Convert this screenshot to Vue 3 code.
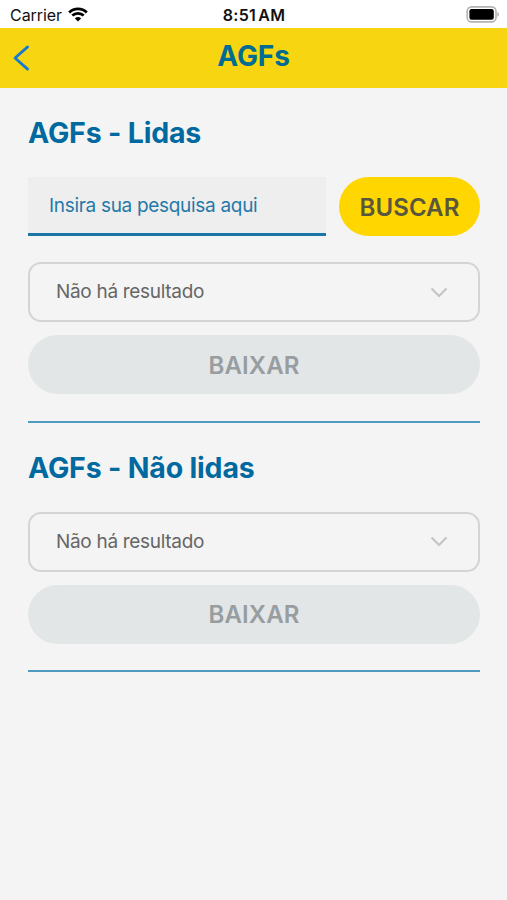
<template>
    <div class="screen">
        <div class="status-bar">
            <div class="status-left">
                <span class="carrier">Carrier</span>
                <svg class="wifi" viewBox="0 0 20 15" width="20" height="15">
                    <path d="M1.2 5.4a12.6 12.6 0 0 1 17.6 0" />
                    <path d="M4.3 8.6a8.2 8.2 0 0 1 11.4 0" />
                    <path class="wifi-dot" d="M10 14.6 6.9 11.4a4.5 4.5 0 0 1 6.2 0z" />
                </svg>
            </div>
            <span class="time">8:51 AM</span>
            <svg class="battery" viewBox="0 0 34 17" width="34" height="17">
                <rect class="battery-shell" x="2.2" y="0.9" width="28.8" height="15" rx="4.4" />
                <rect x="4.4" y="3" width="24.4" height="10.8" rx="2.2" />
                <path class="battery-cap" d="M32.4 6.1v4.6a2.5 2.5 0 0 0 0-4.6z" />
            </svg>
        </div>

        <header class="header">
            <button class="back" aria-label="Voltar">
                <svg viewBox="0 0 18 28" width="18" height="28">
                    <path d="M15.6 2.9 3 14 15.6 25.1" />
                </svg>
            </button>
            <h1>AGFs</h1>
        </header>

        <main class="content">
            <section v-for="section in sections" :key="section.title" class="section">
                <h2>{{ section.title }}</h2>
                <form v-if="section.searchable" class="search" @submit.prevent>
                    <input v-model="search" type="text" placeholder="Insira sua pesquisa aqui">
                    <button class="btn btn-search">BUSCAR</button>
                </form>
                <div class="select">
                    <span>Não há resultado</span>
                    <svg viewBox="0 0 18 12" width="18" height="12">
                        <path d="M1.5 2.5 9 10 16.5 2.5" />
                    </svg>
                </div>
                <button class="btn btn-download" disabled>BAIXAR</button>
            </section>
        </main>
    </div>
</template>

<script setup>
import { ref } from 'vue';

const search = ref('');

const sections = [
    { title: 'AGFs - Lidas', searchable: true },
    { title: 'AGFs - Não lidas', searchable: false }
];
</script>

<style>
body {
    margin: 0;
    background-color: #f4f4f4;
}
</style>

<style scoped>
.screen {
    min-height: 900px;
    background-color: #f4f4f4;
    font-family: Inter, "Liberation Sans", sans-serif;
}

.screen * {
    box-sizing: border-box;
}

.status-bar {
    display: grid;
    grid-template-columns: 1fr auto 1fr;
    align-items: center;
    height: 28px;
    padding: 1px 8px 0 10px;
    background-color: #fff;
    color: #111;
    font-size: 16px;
}

.status-left {
    display: flex;
    align-items: center;
    gap: 6px;
}

.carrier {
    letter-spacing: -0.05px;
}

.wifi path {
    fill: none;
    stroke: #000;
    stroke-width: 2.8;
}

.wifi .wifi-dot {
    fill: #000;
    stroke: none;
}

.time {
    margin-right: 1px;
    font-weight: 600;
    letter-spacing: 0.25px;
    word-spacing: -2px;
}

.battery {
    justify-self: end;
}

.battery-shell {
    fill: #fff;
    stroke: #b3b3b3;
    stroke-width: 1.6;
}

.battery-cap {
    fill: #aaa;
}

.header {
    display: grid;
    grid-template-columns: 60px 1fr 60px;
    align-items: center;
    height: 60px;
    background-color: #f7d611;
}

.back {
    display: flex;
    padding: 0 0 0 12px;
    border: none;
    background: none;
}

.back path {
    fill: none;
    stroke: #147bd1;
    stroke-width: 2.8;
    stroke-linecap: round;
    stroke-linejoin: round;
}

h1,
h2 {
    margin: 0;
    color: #00699f;
    font-weight: 700;
}

h1 {
    padding-bottom: 5px;
    color: #006c91;
    font-size: 28px;
    line-height: 34px;
    letter-spacing: -0.1px;
    text-align: center;
}

.content {
    padding: 0 27px 0 28px;
}

.section {
    padding: 27px 0 26.5px;
    border-bottom: 2px solid #4f9ac2;
}

h2 {
    margin-bottom: 27px;
    font-size: 28.5px;
    line-height: 35px;
    letter-spacing: -0.18px;
}

.search {
    display: flex;
    gap: 13px;
    margin-bottom: 26px;
}

.search input {
    flex: 1;
    min-width: 0;
    height: 59px;
    padding: 0 21px;
    border: none;
    border-bottom: 3px solid #1a75a8;
    border-radius: 0;
    outline: none;
    background-color: #eee;
    color: #2176a6;
    font-family: inherit;
    font-size: 19px;
    letter-spacing: -0.31px;
}

.search input::placeholder {
    color: #2579a9;
    opacity: 1;
}

.btn {
    height: 59px;
    padding: 0;
    border: none;
    border-radius: 30px;
    font-family: inherit;
    font-size: 24px;
    font-weight: 600;
}

.btn-search {
    width: 141px;
    padding-top: 1px;
    background-color: #ffd600;
    color: #58563f;
    letter-spacing: 0.1px;
}

.btn-download {
    display: block;
    width: 100%;
    padding-top: 1px;
    background-color: #e3e6e7;
    color: #989da0;
    letter-spacing: 0.1px;
}

.select {
    display: flex;
    align-items: center;
    justify-content: space-between;
    height: 60px;
    margin-bottom: 13px;
    padding: 0 30px 1px 26px;
    border: 2px solid #d4d4d4;
    border-radius: 13px;
    color: #666;
    font-size: 19px;
    letter-spacing: -0.31px;
}

.select path {
    fill: none;
    stroke: #c4c5c7;
    stroke-width: 2.2;
}
</style>
